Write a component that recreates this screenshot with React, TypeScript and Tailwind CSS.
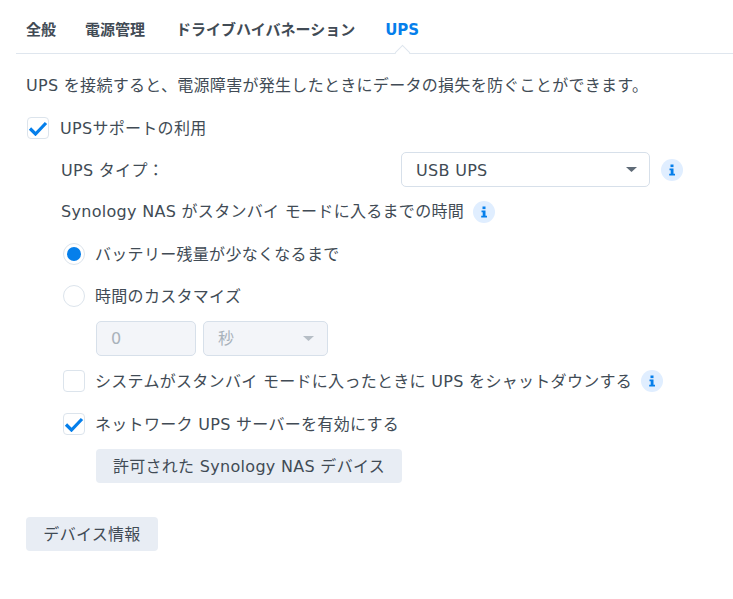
const font = 'font-["DejaVu_Sans","Noto_Sans_CJK_JP",sans-serif]';

function Info() {
  return (
    <span className="flex h-[22px] w-[22px] shrink-0 items-center justify-center rounded-full bg-[#e0eeff]">
      <svg width="10" height="12" viewBox="0 0 10 12" fill="#057feb">
        <rect x="3.5" y="0.5" width="3" height="2.6" />
        <path d="M2.5 4.5H6.5V9.8H8V11.5H2.2V9.8H3.7V6.2H2.5Z" />
      </svg>
    </span>
  );
}

function Check({ checked }: { checked?: boolean }) {
  return (
    <span className="flex h-[22px] w-[22px] shrink-0 items-center justify-center rounded-[4px] border border-[#dce4ec] bg-white">
      {checked && (
        <svg width="20" height="15" viewBox="0 0 20 15" fill="none">
          <path d="M2 7.5L7.5 13L18 2" stroke="#057feb" strokeWidth="3.2" />
        </svg>
      )}
    </span>
  );
}

function Radio({ checked }: { checked?: boolean }) {
  return (
    <span className="flex h-[22px] w-[22px] shrink-0 items-center justify-center rounded-full border border-[#dce4ec] bg-white">
      {checked && <span className="h-[14px] w-[14px] rounded-full bg-[#057feb]" />}
    </span>
  );
}

function Caret({ color }: { color: string }) {
  return (
    <svg width="11" height="5" viewBox="0 0 11 5" fill={color}>
      <path d="M0 0H11L5.5 5Z" />
    </svg>
  );
}

export default function App() {
  return (
    <div className={`${font} h-[599px] w-[733px] overflow-hidden bg-white text-[16px] leading-[22px] tracking-[0.3px] text-[#414b55]`}>
      <div className="relative ml-4 flex h-[54px] items-start gap-[31px] border-b border-[#dfe6ee] pl-[10px] pt-[19px] text-[15px] font-bold leading-[22px] tracking-normal">
        <span className="-mr-[2px]">全般</span>
        <span>電源管理</span>
        <span className="-mr-[1px]">ドライブハイバネーション</span>
        <span className="text-[#057feb]">UPS</span>
        <span className="absolute bottom-[-5px] left-[381px] h-[11px] w-[11px] rotate-45 border-l border-t border-[#dfe6ee] bg-white" />
      </div>

      <div className="pl-[26px]">
        <p className="mt-[21px]">UPS を接続すると、電源障害が発生したときにデータの損失を防ぐことができます。</p>

        <div className="mt-[20px] flex h-[22px] items-center gap-[11px] pl-[1px]">
          <Check checked />
          <span className="pt-[2px]">UPSサポートの利用</span>
        </div>

        <div className="pl-[35px]">
          <div className="mt-[13px] flex h-[35px] items-center">
            <span className="w-[340px] pt-[2px]">UPS タイプ：</span>
            <div className="flex h-[35px] w-[249px] items-center justify-between rounded-[5px] border border-[#d7e0ea] pl-[14px] pr-[12px]">
              <span className="pt-[2px]">USB UPS</span>
              <Caret color="#5f6b77" />
            </div>
            <span className="ml-[11px]"><Info /></span>
          </div>

          <div className="mt-[14px] flex h-[22px] items-center gap-[9px]">
            <span>Synology NAS がスタンバイ モードに入るまでの時間</span>
            <Info />
          </div>

          <div className="mt-[20px] flex h-[22px] items-center gap-[10px] pl-[2px]">
            <Radio checked />
            <span className="pt-[2px]">バッテリー残量が少なくなるまで</span>
          </div>

          <div className="mt-[20px] flex h-[22px] items-center gap-[10px] pl-[2px]">
            <Radio />
            <span className="pt-[2px]">時間のカスタマイズ</span>
          </div>

          <div className="mt-[14px] flex gap-[7px] pl-[35px] text-[#a9b2bb]">
            <div className="flex h-[35px] w-[100px] items-center rounded-[5px] border border-[#d7e0ea] bg-[#f3f5f9] pl-[14px]">0</div>
            <div className="flex h-[35px] w-[125px] items-center justify-between rounded-[5px] border border-[#d7e0ea] bg-[#f3f5f9] pl-[14px] pr-[13px]">
              <span>秒</span>
              <Caret color="#b6bec6" />
            </div>
          </div>

          <div className="mt-[14px] flex h-[22px] items-center gap-[10px] pl-[2px]">
            <Check />
            <span className="pt-[2px]">システムがスタンバイ モードに入ったときに UPS をシャットダウンする</span>
            <span className="-ml-[1px]"><Info /></span>
          </div>

          <div className="mt-[21px] flex h-[22px] items-center gap-[10px] pl-[2px]">
            <Check checked />
            <span className="pt-[2px]">ネットワーク UPS サーバーを有効にする</span>
          </div>

          <button className="ml-[35px] mt-[14px] block h-[34px] w-[306px] rounded-[4px] bg-[#e8edf4] pt-[2px] text-center">
            許可された Synology NAS デバイス
          </button>
        </div>

        <button className="mt-[34px] block h-[34px] w-[132px] rounded-[4px] bg-[#e8edf4] pt-[2px] text-center">
          デバイス情報
        </button>
      </div>
    </div>
  );
}
